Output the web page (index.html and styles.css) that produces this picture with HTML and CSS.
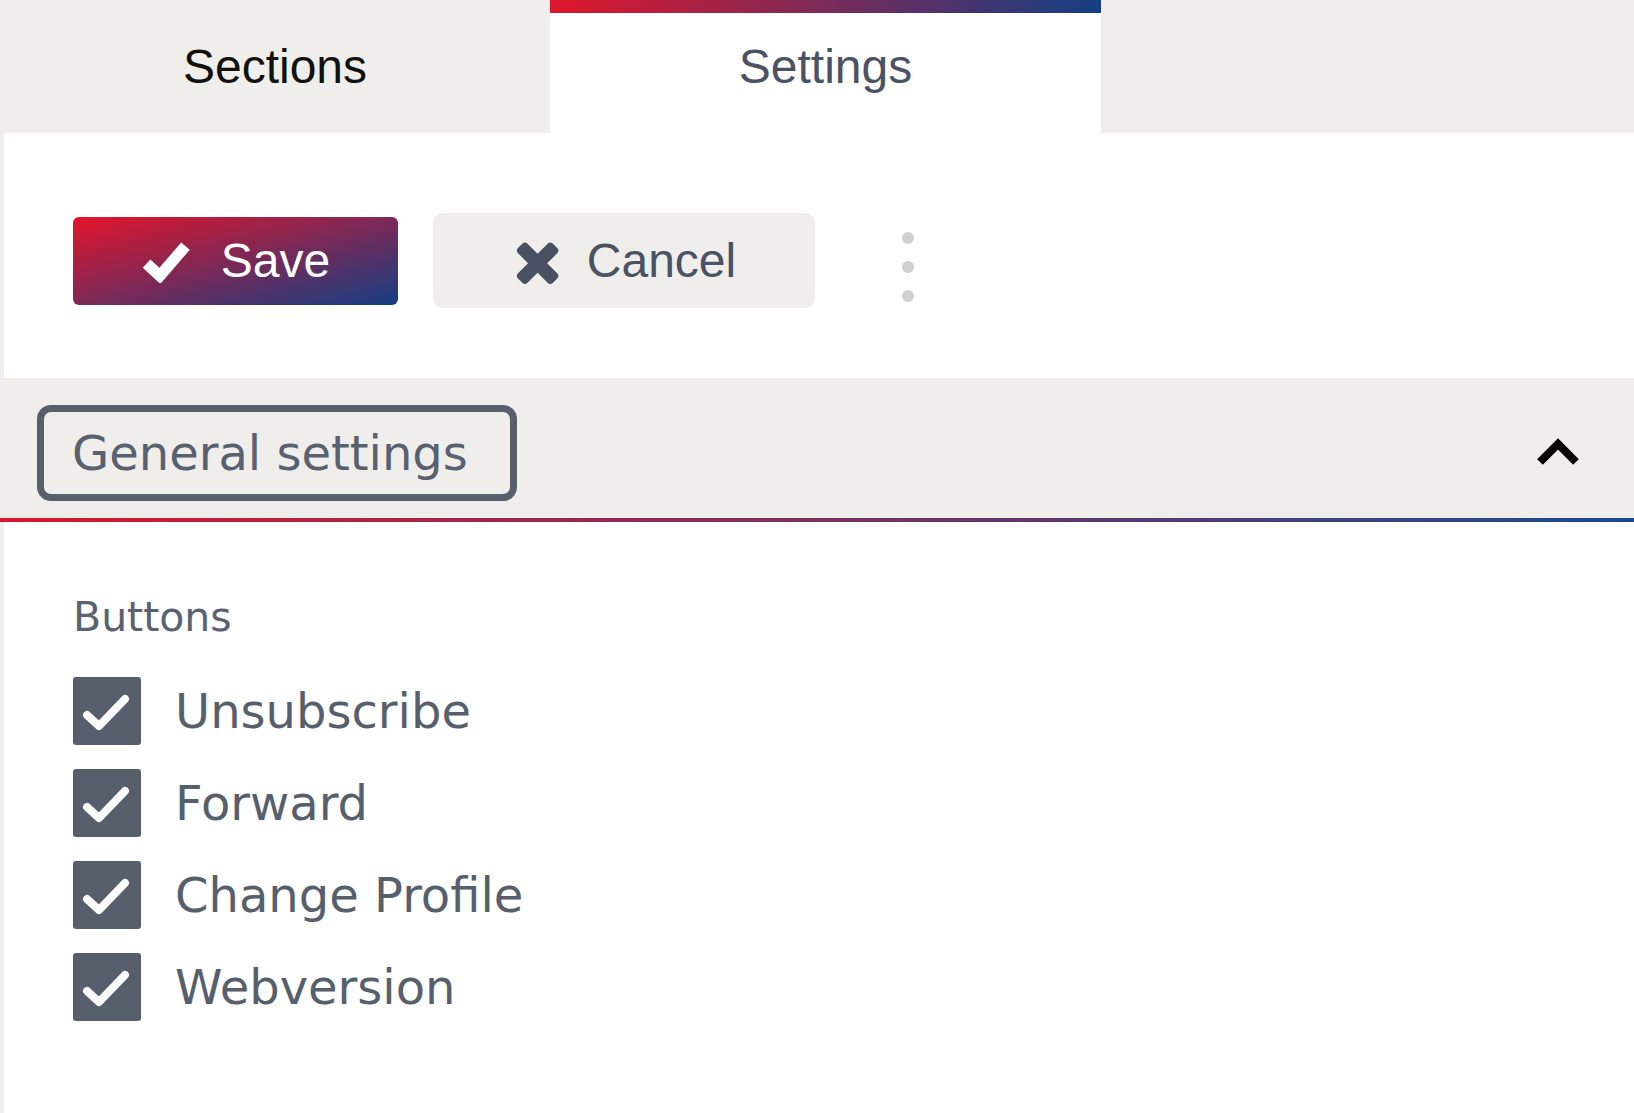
FILE: index.html
```html
<!DOCTYPE html>
<html lang="en">
<head>
    <meta charset="UTF-8">
    <title>Settings</title>
    <link rel="stylesheet" href="styles.css">
</head>
<body>
    <div class="tabs">
        <div class="tab">Sections</div>
        <div class="tab active">Settings</div>
    </div>

    <div class="panel">
        <div class="toolbar">
            <button class="btn btn-save" type="button">
                <svg class="icon-check" viewBox="0 0 48 44" width="50" height="45">
                    <polyline points="5,25 18,37 43,8" fill="none" stroke="#fff" stroke-width="11" stroke-linejoin="miter"/>
                </svg>
                Save
            </button>
            <button class="btn btn-cancel" type="button">
                <svg class="icon-times" viewBox="182 240 1308 1312" width="47" height="46">
                    <path fill="#485061" d="M1490 1322q0 40-28 68l-136 136q-28 28-68 28t-68-28l-294-294-294 294q-28 28-68 28t-68-28l-136-136q-28-28-28-68t28-68l294-294-294-294q-28-28-28-68t28-68l136-136q28-28 68-28t68 28l294 294 294-294q28-28 68-28t68 28l136 136q28 28 28 68t-28 68l-294 294 294 294q28 28 28 68z"/>
                </svg>
                Cancel
            </button>
            <div class="more">
                <span></span>
                <span></span>
                <span></span>
            </div>
        </div>

        <div class="section-head">
            <div class="section-title">General settings</div>
            <svg class="chevron" viewBox="0 0 44 28" width="44" height="28">
                <polyline points="4,24 22,6 40,24" fill="none" stroke="#000" stroke-width="8"/>
            </svg>
        </div>

        <div class="section-body">
            <div class="group-label">Buttons</div>
            <div class="checks">
                <label class="check-row"><span class="box"><svg viewBox="0 0 68 68" width="68" height="68"><polyline points="14,38 26,49 52,22" fill="none" stroke="#fff" stroke-width="8" stroke-linecap="round" stroke-linejoin="round"/></svg></span>Unsubscribe</label>
                <label class="check-row"><span class="box"><svg viewBox="0 0 68 68" width="68" height="68"><polyline points="14,38 26,49 52,22" fill="none" stroke="#fff" stroke-width="8" stroke-linecap="round" stroke-linejoin="round"/></svg></span>Forward</label>
                <label class="check-row"><span class="box"><svg viewBox="0 0 68 68" width="68" height="68"><polyline points="14,38 26,49 52,22" fill="none" stroke="#fff" stroke-width="8" stroke-linecap="round" stroke-linejoin="round"/></svg></span>Change Profile</label>
                <label class="check-row"><span class="box"><svg viewBox="0 0 68 68" width="68" height="68"><polyline points="14,38 26,49 52,22" fill="none" stroke="#fff" stroke-width="8" stroke-linecap="round" stroke-linejoin="round"/></svg></span>Webversion</label>
            </div>
        </div>
    </div>
</body>
</html>
```

FILE: styles.css
```css
body {
    margin: 0;
    background-color: #efeeea;
    font-family: "DejaVu Sans", Verdana, sans-serif;
    color: #545b6a;
}

.tabs {
    display: flex;
    height: 133px;
    font-family: "Liberation Sans", Arial, sans-serif;
    font-size: 48px;
}

.tab {
    width: 550px;
    display: flex;
    justify-content: center;
    align-items: center;
    color: #111;
}

.tab.active {
    width: 551px;
    color: #4b5263;
    background: linear-gradient(90deg, #df162b, #153f84) top / 100% 13px no-repeat, #fff;
}

.panel {
    margin-left: 4px;
    min-height: 980px;
    background-color: #fff;
}

.toolbar {
    display: flex;
    align-items: center;
    height: 245px;
    padding: 80px 0 70px 69px;
    box-sizing: border-box;
}

.btn {
    display: flex;
    justify-content: center;
    align-items: center;
    border: none;
    font-family: "Liberation Sans", Arial, sans-serif;
    font-size: 48px;
    padding: 0;
}

.btn-save {
    width: 325px;
    height: 88px;
    gap: 30px;
    margin-right: 35px;
    border-radius: 6px;
    color: #fff;
    background: linear-gradient(to bottom right, #e3142a, #153e82);
}

.btn-cancel {
    width: 382px;
    height: 95px;
    gap: 28px;
    border-radius: 9px;
    color: #4b5263;
    background-color: #efeeea;
}

.more {
    display: flex;
    flex-direction: column;
    gap: 17px;
    margin: 13px 0 0 87px;
}

.more span {
    width: 12px;
    height: 12px;
    border-radius: 50%;
    background-color: #d0d0d0;
}

.section-head {
    display: flex;
    justify-content: space-between;
    align-items: center;
    height: 144px;
    margin-left: -4px;
    padding: 6px 54px 0 37px;
    box-sizing: border-box;
    background: linear-gradient(90deg, #d9172d, #1b4a8e) bottom / 100% 4px no-repeat, #efeeea;
}

.section-title {
    height: 96px;
    box-sizing: border-box;
    display: flex;
    align-items: center;
    padding: 0 42px 0 28px;
    border: 7px solid #575e6c;
    border-radius: 14px;
    font-size: 48px;
    color: #596070;
}

.chevron {
    margin-top: -2px;
}

.section-body {
    padding: 71px 0 0 69px;
}

.group-label {
    font-size: 41px;
    line-height: 48px;
    color: #5a6170;
}

.checks {
    display: flex;
    flex-direction: column;
    gap: 24px;
    margin-top: 36px;
}

.check-row {
    display: flex;
    align-items: center;
    gap: 34px;
    height: 68px;
    font-size: 48px;
    line-height: 62px;
    color: #575e6c;
}

.box {
    align-self: flex-start;
    width: 68px;
    height: 68px;
    border-radius: 3px;
    background-color: #575e6c;
}

.box svg {
    display: block;
}
```
